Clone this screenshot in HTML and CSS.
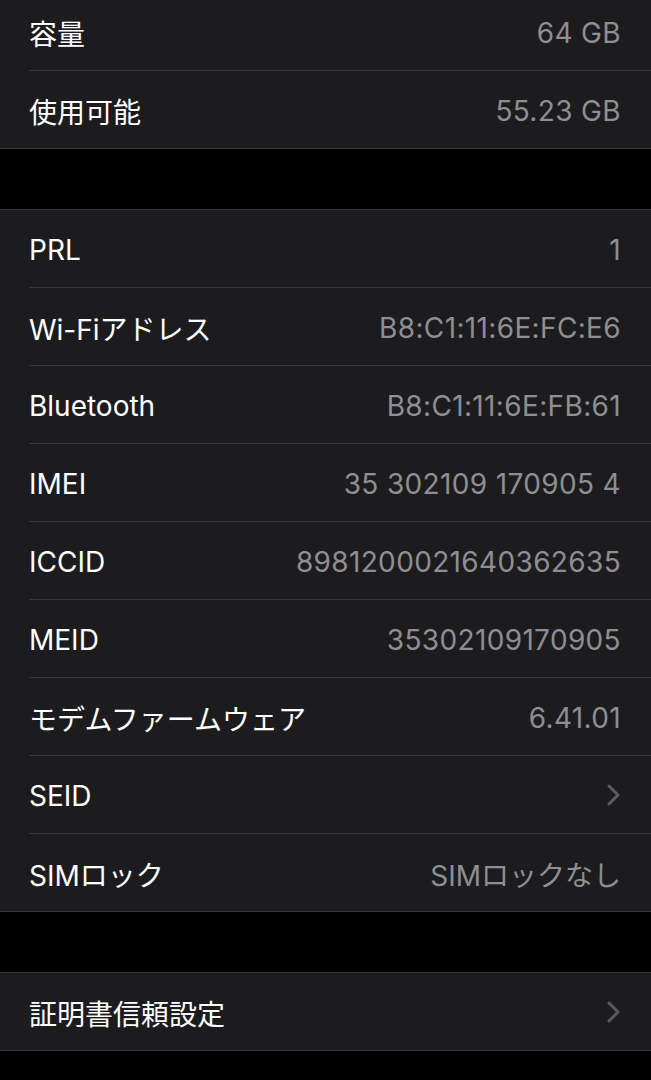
FILE: index.html
```html
<!DOCTYPE html>
<html>

<head>
    <meta name="viewport" content="width=device-width, initial-scale=1.0">
    <title>情報</title>
    <link rel="stylesheet" href="styles.css">
</head>

<body>
    <div class="list">
        <!-- storage -->
        <div class="group first">
            <div class="row">
                <div class="row-body"><span class="label">容量</span><span class="value">64 GB</span></div>
            </div>
            <div class="row">
                <div class="row-body"><span class="label">使用可能</span><span class="value">55.23 GB</span></div>
            </div>
        </div>

        <div class="spacer"></div>

        <!-- network / device ids -->
        <div class="group">
            <div class="row">
                <div class="row-body"><span class="label">PRL</span><span class="value">1</span></div>
            </div>
            <div class="row">
                <div class="row-body"><span class="label">Wi-Fiアドレス</span><span class="value">B8:C1:11:6E:FC:E6</span></div>
            </div>
            <div class="row">
                <div class="row-body"><span class="label">Bluetooth</span><span class="value">B8:C1:11:6E:FB:61</span></div>
            </div>
            <div class="row">
                <div class="row-body"><span class="label">IMEI</span><span class="value">35 302109 170905 4</span></div>
            </div>
            <div class="row">
                <div class="row-body"><span class="label">ICCID</span><span class="value">8981200021640362635</span></div>
            </div>
            <div class="row">
                <div class="row-body"><span class="label">MEID</span><span class="value">35302109170905</span></div>
            </div>
            <div class="row">
                <div class="row-body"><span class="label">モデムファームウェア</span><span class="value">6.41.01</span></div>
            </div>
            <div class="row">
                <div class="row-body">
                    <span class="label">SEID</span>
                    <svg class="chevron" width="13" height="22" viewBox="0 0 13 22">
                        <polyline points="2,2 11,11 2,20" />
                    </svg>
                </div>
            </div>
            <div class="row">
                <div class="row-body"><span class="label">SIMロック</span><span class="value jp">SIMロックなし</span></div>
            </div>
        </div>

        <div class="spacer"></div>

        <div class="group">
            <div class="row">
                <div class="row-body">
                    <span class="label">証明書信頼設定</span>
                    <svg class="chevron" width="13" height="22" viewBox="0 0 13 22">
                        <polyline points="2,2 11,11 2,20" />
                    </svg>
                </div>
            </div>
        </div>
    </div>
</body>

</html>
```

FILE: styles.css
```css
body {
    margin: 0;
    padding: 0;
    background-color: #000;
    font-family: Inter, "Noto Sans CJK JP", sans-serif;
    font-size: 28px;
    color: #fff;
    overflow: hidden;
}

.list {
    display: flex;
    flex-direction: column;
}

.group {
    background-color: #1c1c1e;
    border-top: 1px solid #38383a;
    border-bottom: 1px solid #38383a;
}

/* page is scrolled a little, first row is cut at the top */
.group.first {
    margin-top: -8px;
}

.spacer {
    height: 60px;
}

.row {
    padding-left: 29px;
}

.row-body {
    height: 78px;
    box-sizing: border-box;
    padding-right: 30px;
    display: flex;
    align-items: center;
    justify-content: space-between;
    border-bottom: 1px solid #38383a;
}

.row:last-child .row-body {
    height: 77px;
    border-bottom: none;
}

.label {
    padding-top: 3px;
}

.value {
    color: #8e8e93;
    padding-top: 3px;
    letter-spacing: 0.35px;
}

.value.jp {
    letter-spacing: 0;
}

.chevron {
    margin-right: 1px;
}

.chevron polyline {
    fill: none;
    stroke: #5a5a5f;
    stroke-width: 3;
    stroke-linecap: round;
    stroke-linejoin: round;
}
```
